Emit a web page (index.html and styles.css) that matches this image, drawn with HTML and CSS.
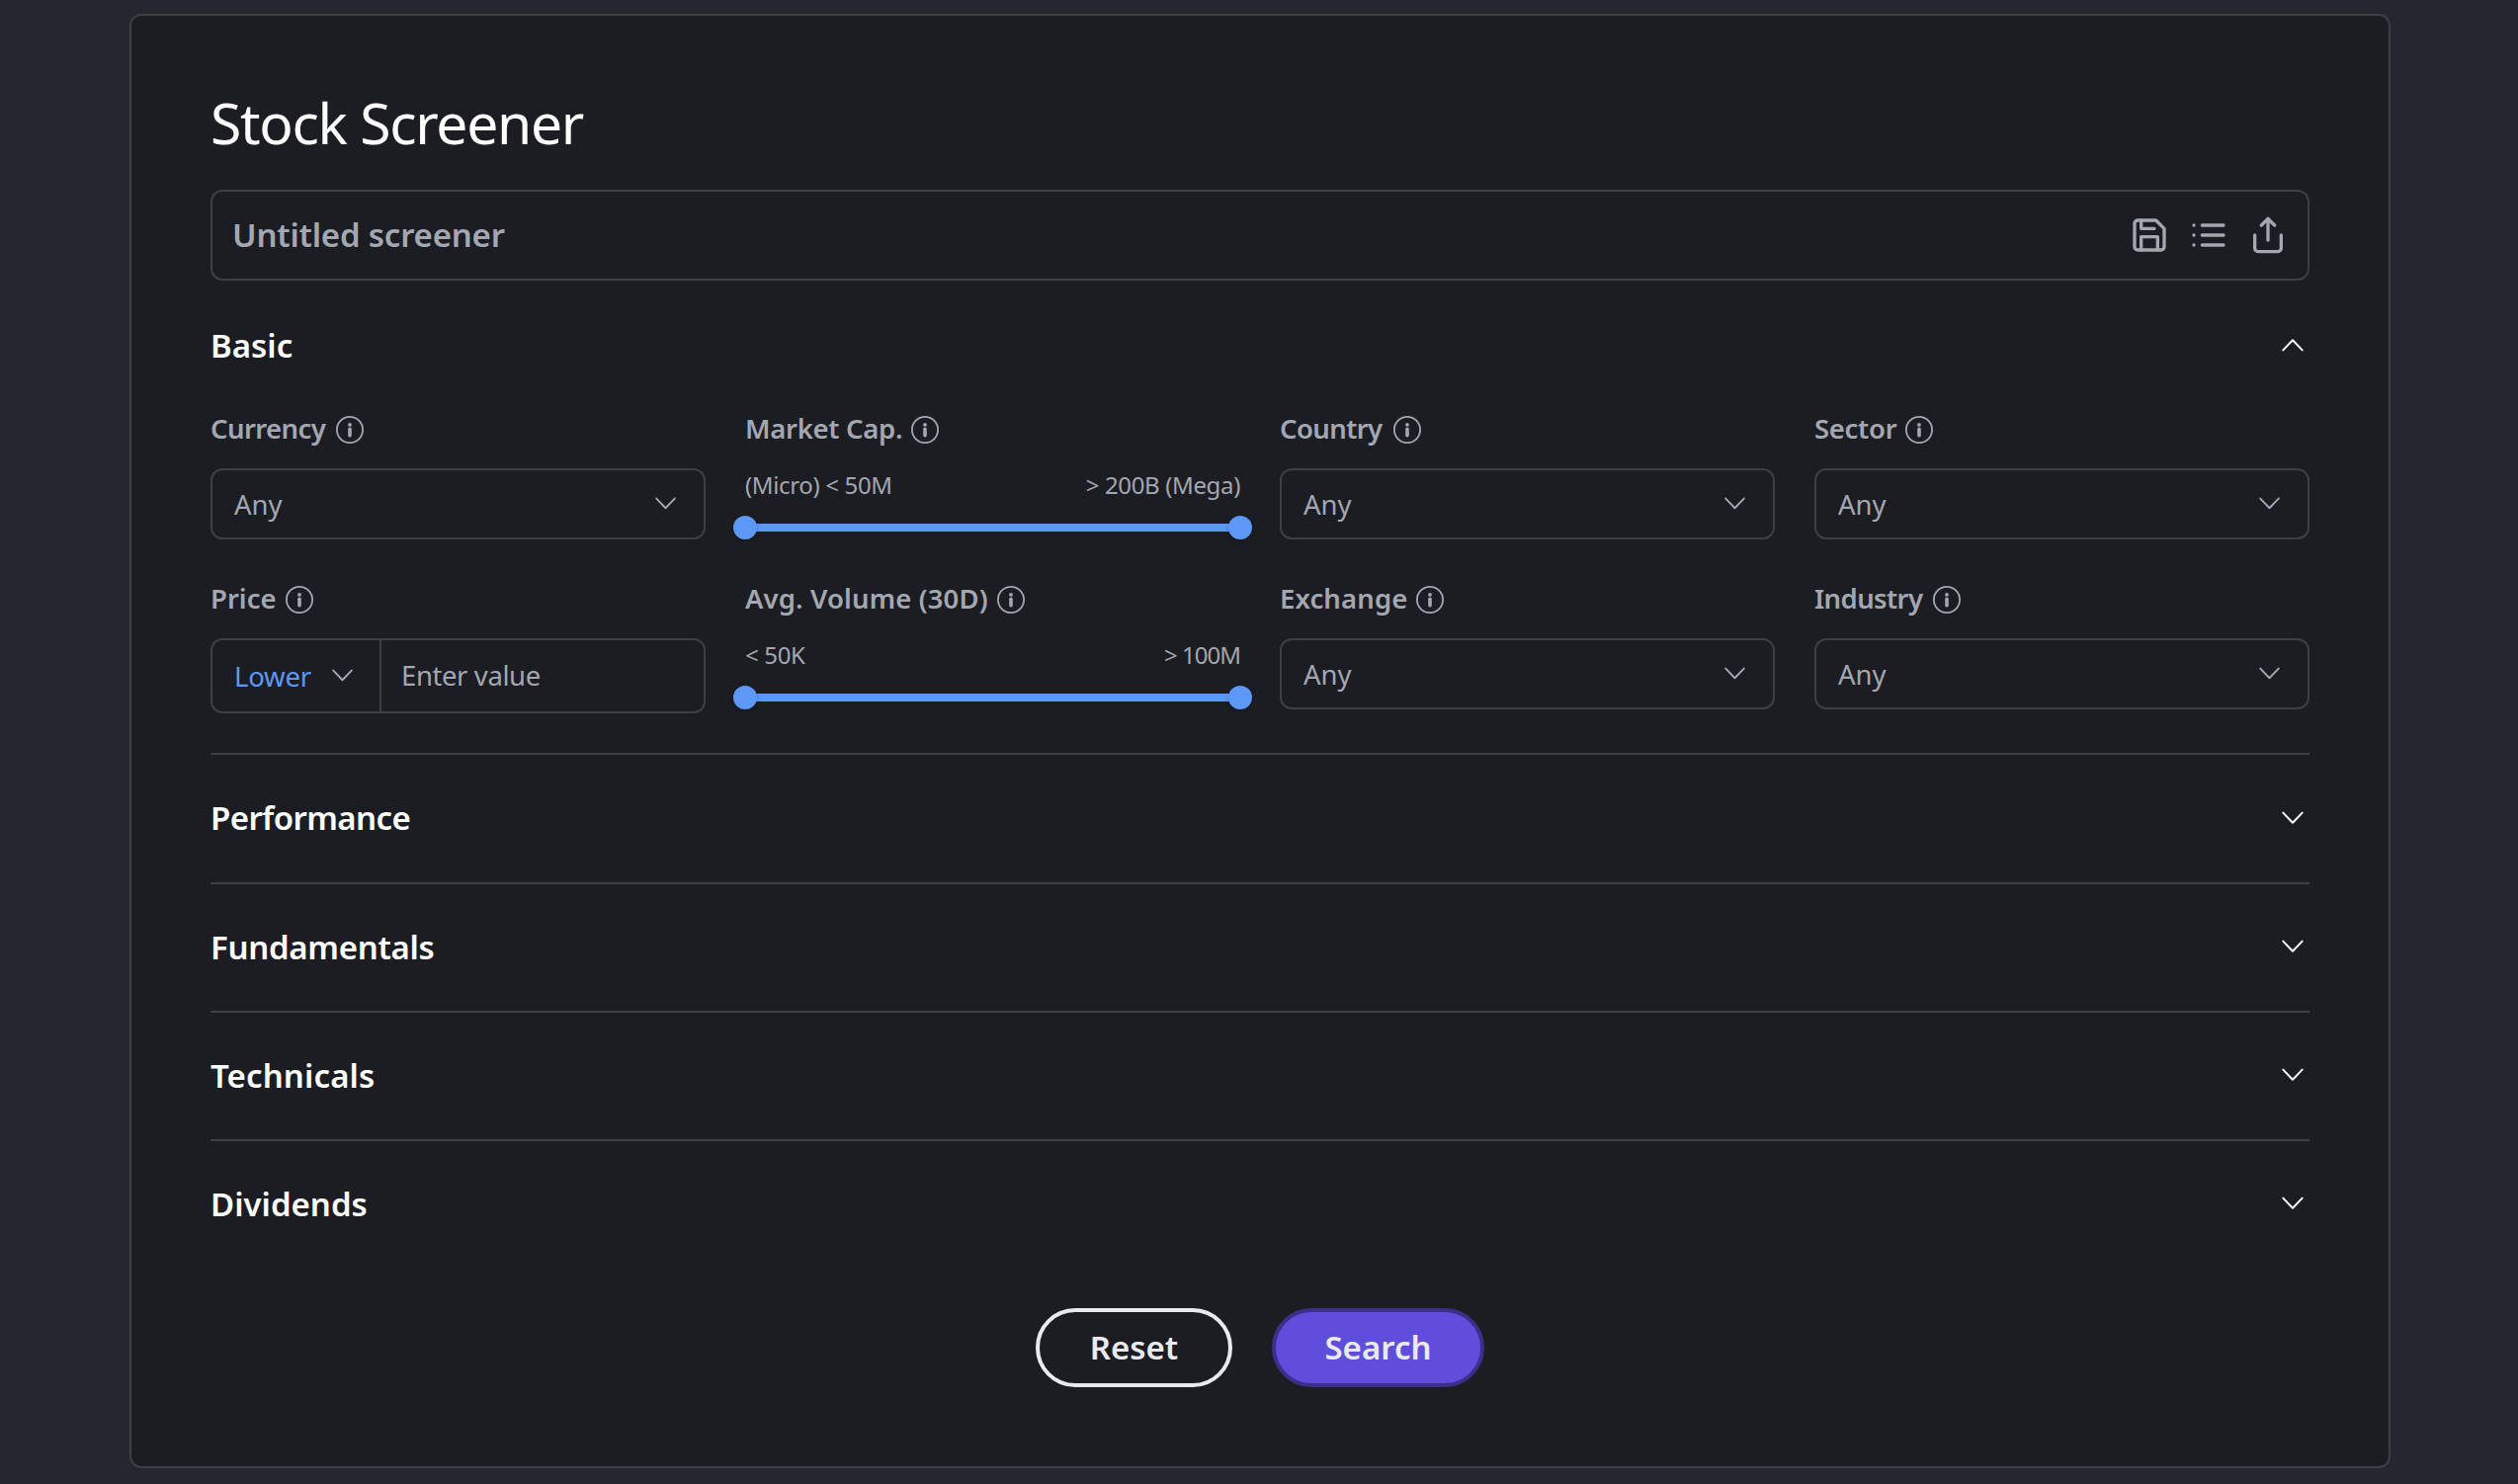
FILE: index.html
```html
<!DOCTYPE html>
<html lang="en">
<head>
    <meta charset="UTF-8">
    <meta name="viewport" content="width=device-width, initial-scale=1.0">
    <title>Stock Screener</title>
    <link rel="stylesheet" href="styles.css">
</head>
<body>
    <!-- Shared icons -->
    <svg class="sprite">
        <symbol id="chevron" viewBox="0 0 22 14">
            <polyline points="1.3,1.6 11,11.8 20.7,1.6" fill="none" stroke="currentColor" stroke-width="2" stroke-linecap="round" stroke-linejoin="round"/>
        </symbol>
        <symbol id="info" viewBox="0 0 28 28">
            <circle cx="14" cy="14" r="13.1" fill="none" stroke="currentColor" stroke-width="1.8"/>
            <circle cx="14" cy="8.9" r="1.9" fill="currentColor"/>
            <rect x="12.2" y="11.6" width="3.6" height="9.8" rx="1.6" fill="currentColor"/>
        </symbol>
    </svg>

    <main class="card">
        <h1 class="title">Stock Screener</h1>

        <div class="name-bar">
            <input class="name-input" type="text" placeholder="Untitled screener">
            <div class="actions">
                <svg class="action-icon" viewBox="0 0 24 24">
                    <path d="M19 21H5a2 2 0 0 1-2-2V5a2 2 0 0 1 2-2h11l5 5v11a2 2 0 0 1-2 2z"/>
                    <polyline points="17 21 17 13 7 13 7 21"/>
                    <polyline points="7 3 7 8 15 8"/>
                </svg>
                <svg class="action-icon" viewBox="0 0 24 24">
                    <line x1="8" y1="6" x2="21" y2="6"/>
                    <line x1="8" y1="12" x2="21" y2="12"/>
                    <line x1="8" y1="18" x2="21" y2="18"/>
                    <line x1="3" y1="6" x2="3.01" y2="6"/>
                    <line x1="3" y1="12" x2="3.01" y2="12"/>
                    <line x1="3" y1="18" x2="3.01" y2="18"/>
                </svg>
                <svg class="action-icon" viewBox="0 0 24 24">
                    <path d="M4 12v8a2 2 0 0 0 2 2h12a2 2 0 0 0 2-2v-8"/>
                    <polyline points="16 6 12 2 8 6"/>
                    <line x1="12" y1="2" x2="12" y2="15"/>
                </svg>
            </div>
        </div>

        <section class="section basic">
            <div class="section-header">
                <h2>Basic</h2>
                <svg class="toggle open"><use href="#chevron"/></svg>
            </div>
            <div class="filters">
                <div class="field">
                    <div class="label"><span class="tight">Currency</span><svg class="info"><use href="#info"/></svg></div>
                    <div class="select"><span>Any</span><svg class="arrow"><use href="#chevron"/></svg></div>
                </div>
                <div class="field">
                    <div class="label"><span class="snug">Market Cap.</span><svg class="info"><use href="#info"/></svg></div>
                    <div class="range-labels"><span>(Micro) &lt; 50M</span><span>&gt; 200B (Mega)</span></div>
                    <div class="range"><span class="thumb"></span><span class="thumb"></span></div>
                </div>
                <div class="field">
                    <div class="label"><span class="tight">Country</span><svg class="info"><use href="#info"/></svg></div>
                    <div class="select"><span>Any</span><svg class="arrow"><use href="#chevron"/></svg></div>
                </div>
                <div class="field">
                    <div class="label"><span class="snug">Sector</span><svg class="info"><use href="#info"/></svg></div>
                    <div class="select"><span>Any</span><svg class="arrow"><use href="#chevron"/></svg></div>
                </div>
                <div class="field">
                    <div class="label"><span>Price</span><svg class="info"><use href="#info"/></svg></div>
                    <div class="price">
                        <div class="price-mode"><span>Lower</span><svg class="arrow"><use href="#chevron"/></svg></div>
                        <input class="price-input" type="text" placeholder="Enter value">
                    </div>
                </div>
                <div class="field">
                    <div class="label"><span class="wide">Avg. Volume (30D)</span><svg class="info"><use href="#info"/></svg></div>
                    <div class="range-labels"><span>&lt; 50K</span><span class="narrow">&gt; 100M</span></div>
                    <div class="range"><span class="thumb"></span><span class="thumb"></span></div>
                </div>
                <div class="field">
                    <div class="label"><span class="wide">Exchange</span><svg class="info"><use href="#info"/></svg></div>
                    <div class="select"><span>Any</span><svg class="arrow"><use href="#chevron"/></svg></div>
                </div>
                <div class="field">
                    <div class="label"><span class="tight">Industry</span><svg class="info"><use href="#info"/></svg></div>
                    <div class="select"><span>Any</span><svg class="arrow"><use href="#chevron"/></svg></div>
                </div>
            </div>
        </section>

        <section class="section">
            <div class="section-header">
                <h2 class="tight">Performance</h2>
                <svg class="toggle"><use href="#chevron"/></svg>
            </div>
        </section>
        <section class="section">
            <div class="section-header">
                <h2 class="snug">Fundamentals</h2>
                <svg class="toggle"><use href="#chevron"/></svg>
            </div>
        </section>
        <section class="section">
            <div class="section-header">
                <h2 class="wide">Technicals</h2>
                <svg class="toggle"><use href="#chevron"/></svg>
            </div>
        </section>
        <section class="section">
            <div class="section-header">
                <h2>Dividends</h2>
                <svg class="toggle"><use href="#chevron"/></svg>
            </div>
        </section>

        <div class="buttons">
            <button class="btn btn-reset" type="button">Reset</button>
            <button class="btn btn-search" type="button">Search</button>
        </div>
    </main>
</body>
</html>
```
FILE: styles.css
```css
* {
    box-sizing: border-box;
}
body {
    margin: 0;
    padding: 14px 129px 16px 131px;
    background-color: #242730;
    color: #a3a7b1;
    font-family: "Noto Sans", sans-serif;
    font-size: 27.5px;
}
.sprite {
    display: none;
}
.card {
    height: 1472px;
    padding: 80px;
    border: 2px solid #3e3f42;
    border-radius: 12px;
    background-color: #1c1d22;
}
.title {
    margin: 0 0 40px;
    color: #fff;
    font-size: 57px;
    font-weight: 400;
    line-height: 56px;
    letter-spacing: -1.3px;
}

/* Screener name */
.name-bar {
    display: flex;
    align-items: center;
    height: 92px;
    padding: 0 20px;
    border: 2px solid #3e3f42;
    border-radius: 12px;
}
input {
    min-width: 0;
    flex: 1;
    padding: 0;
    border: none;
    outline: none;
    background: none;
    color: inherit;
    font-family: inherit;
}
input::placeholder {
    color: #a3a7b1;
    opacity: 1;
}
.name-input {
    padding-bottom: 1px;
    font-size: 33px;
    font-weight: 600;
    letter-spacing: -0.22px;
}
.actions {
    display: flex;
    gap: 20px;
}
.action-icon {
    width: 40px;
    height: 40px;
    fill: none;
    stroke: currentColor;
    stroke-width: 2;
    stroke-linecap: round;
    stroke-linejoin: round;
}

/* Sections */
.section {
    border-bottom: 2px solid #3e3f42;
}
.section:last-of-type {
    border-bottom: none;
}
.basic {
    margin-top: 1.7px;
    padding-bottom: 40.4px;
}
.section-header {
    display: flex;
    align-items: center;
    justify-content: space-between;
    height: 128.3px;
    padding: 0 6.5px 2px 0;
    color: #fff;
}
.section-header h2 {
    margin: 1.4px 0 0;
    font-size: 33px;
    font-weight: 600;
    line-height: 44px;
}
.toggle {
    width: 22px;
    height: 14px;
}
.toggle.open {
    transform: rotate(180deg);
}

/* Filters */
.filters {
    display: grid;
    grid-template-columns: repeat(4, minmax(0, 1fr));
    gap: 40px;
}
.label {
    display: flex;
    align-items: center;
    gap: 9px;
    height: 40px;
    margin-bottom: 20px;
    font-weight: 600;
}
.info {
    width: 28px;
    height: 28px;
    margin-top: 2px;
}
.wide {
    letter-spacing: 0.12px;
}
.snug {
    letter-spacing: -0.3px;
}
.tight {
    margin-right: 2px;
    letter-spacing: -0.6px;
}
.select {
    display: flex;
    align-items: center;
    justify-content: space-between;
    height: 72px;
    padding: 0 28px 0 22px;
    border: 2px solid #3e3f42;
    border-radius: 12px;
}
.select span {
    padding-top: 2px;
}
.arrow {
    width: 21px;
    height: 13.4px;
}
.price {
    display: flex;
    height: 76px;
    border: 2px solid #3e3f42;
    border-radius: 12px;
}
.price-mode {
    display: flex;
    align-items: center;
    justify-content: space-between;
    width: 171px;
    padding: 0 27px 0 22px;
    border-right: 2px solid #3e3f42;
}
.price-mode span {
    padding-top: 2px;
    color: #5c98f8;
    letter-spacing: -0.2px;
}
.price-input {
    padding: 0 20px;
    font-size: 27.5px;
    letter-spacing: -0.4px;
}
.range-labels {
    display: flex;
    justify-content: space-between;
    margin-bottom: 15px;
    font-size: 24px;
    line-height: 33px;
    letter-spacing: -0.35px;
}
.range-labels .narrow {
    letter-spacing: -1px;
}
.range {
    display: flex;
    align-items: center;
    justify-content: space-between;
    height: 24px;
    margin: 0 -12px;
    background: linear-gradient(#5c98f8, #5c98f8) center / calc(100% - 24px) 8px no-repeat;
}
.thumb {
    width: 24px;
    height: 24px;
    border-radius: 50%;
    background-color: #5c98f8;
    box-shadow: 0 2px 4px rgba(0, 0, 0, 0.2);
}

/* Buttons */
.buttons {
    display: flex;
    justify-content: center;
    gap: 40px;
    margin-top: 40.4px;
}
.btn {
    height: 80px;
    padding: 0;
    border: 4px solid;
    border-radius: 40px;
    color: #e9eaf0;
    font-family: inherit;
    font-size: 33px;
    font-weight: 600;
    cursor: pointer;
}
.btn-reset {
    width: 199px;
    border-color: #e9eaf0;
    background: none;
}
.btn-search {
    width: 215px;
    border-color: #3b2f8c;
    background-color: #5f4ddb;
}
```
